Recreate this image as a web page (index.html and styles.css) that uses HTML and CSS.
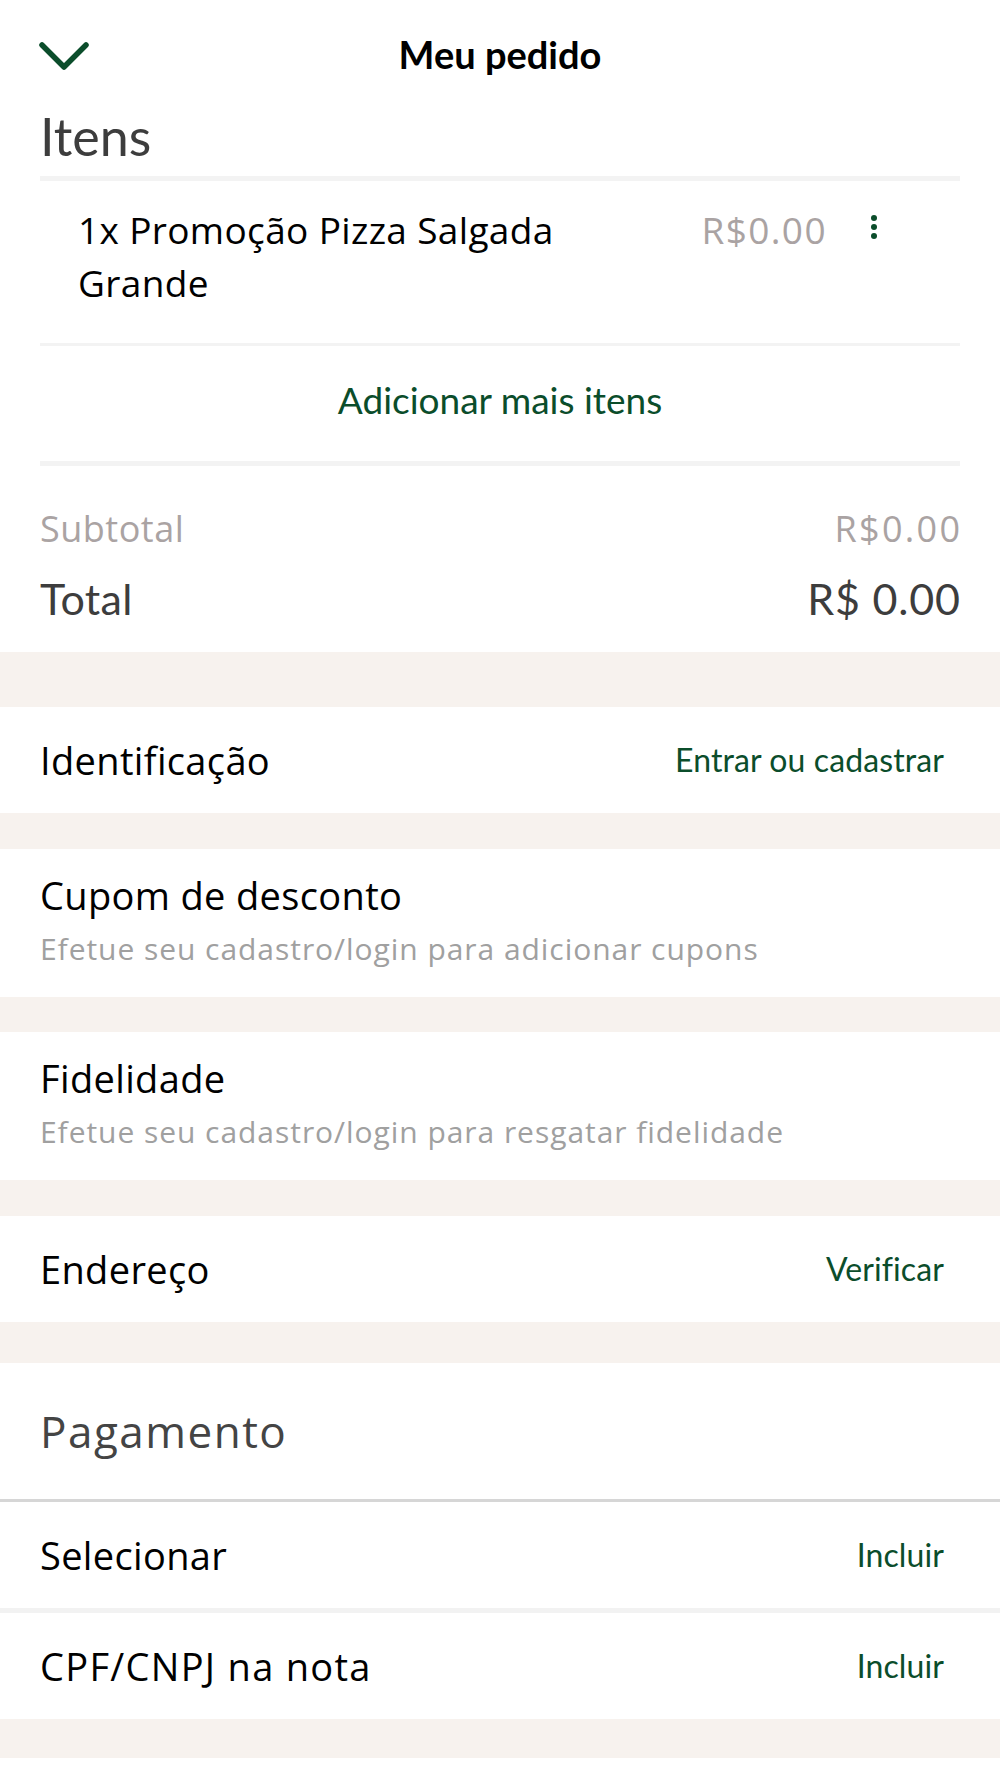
FILE: index.html
```html
<!DOCTYPE html>
<html lang="pt-BR">
<head>
<meta charset="utf-8">
<title>Meu pedido</title>
<link rel="stylesheet" href="styles.css">
</head>
<body>
<div class="page">
  <header class="topbar">
    <span class="back" aria-label="Fechar">
      <svg width="52" height="30" viewBox="0 0 52 30"><path d="M4 4 L26 26 L48 4" fill="none" stroke="#0b4d2b" stroke-width="5.5" stroke-linecap="round" stroke-linejoin="round"/></svg>
    </span>
    <h1 class="title">Meu pedido</h1>
  </header>

  <section class="items">
    <h2 class="section-title">Itens</h2>
    <div class="divider thick"></div>
    <div class="item">
      <div class="item-name">1x Promoção Pizza Salgada Grande</div>
      <div class="item-price">R$0.00</div>
      <div class="kebab"><span></span><span></span><span></span></div>
    </div>
    <div class="divider thin"></div>
    <div class="add-more">Adicionar mais itens</div>
    <div class="divider thick"></div>
    <div class="totals">
      <div class="subtotal"><span>Subtotal</span><span class="sub-price">R$0.00</span></div>
      <div class="total"><span>Total</span><span class="total-price">R$ 0.00</span></div>
    </div>
  </section>

  <div class="gap g55"></div>

  <div class="row">
    <span class="label">Identificação</span>
    <span class="link">Entrar ou cadastrar</span>
  </div>

  <div class="gap g36"></div>

  <div class="card">
    <div class="label">Cupom de desconto</div>
    <div class="hint">Efetue seu cadastro/login para adicionar cupons</div>
  </div>

  <div class="gap g35"></div>

  <div class="card">
    <div class="label">Fidelidade</div>
    <div class="hint">Efetue seu cadastro/login para resgatar fidelidade</div>
  </div>

  <div class="gap g36"></div>

  <div class="row">
    <span class="label">Endereço</span>
    <span class="link">Verificar</span>
  </div>

  <div class="gap g41"></div>

  <div class="pay-head">Pagamento</div>
  <div class="rule dark"></div>
  <div class="row">
    <span class="label">Selecionar</span>
    <span class="link">Incluir</span>
  </div>
  <div class="rule light"></div>
  <div class="row">
    <span class="label wide">CPF/CNPJ na nota</span>
    <span class="link">Incluir</span>
  </div>

  <div class="gap g39"></div>
  <div class="tail"></div>
</div>
</body>
</html>
```

FILE: styles.css
```css
* { box-sizing: border-box; }
html, body { margin: 0; padding: 0; background: #ffffff; }
body {
  font-family: "Open Sans", "Noto Sans", "Liberation Sans", sans-serif;
  color: #000;
  width: 1000px;
}
.page { width: 1000px; }

.topbar {
  height: 104px;
  padding: 4px 40px 0 38px;
  display: flex;
  align-items: center;
  position: relative;
}
.back { display: flex; width: 52px; height: 30px; margin-top: 4px; }
.title {
  position: absolute;
  left: 0; right: 0; top: 4px;
  margin: 0;
  text-align: center;
  font-family: Lato, "Open Sans", sans-serif;
  font-size: 38px;
  font-weight: 700;
  line-height: 100px;
  pointer-events: none;
}

.items { padding: 0 40px; }
.section-title {
  margin: 0 0 8px;
  font-family: Lato, "Open Sans", sans-serif;
  font-size: 52px;
  font-weight: 400;
  line-height: 64px;
  color: #3d3d3d;
}
.divider { background: #f3f3f3; }
.divider.thick { height: 5px; }
.divider.thin { height: 3px; }

.item {
  display: flex;
  align-items: flex-start;
  padding: 22px 0 34px 38px;
}
.item-name {
  flex: 1;
  font-size: 37px;
  letter-spacing: 0.35px;
  line-height: 53px;
  padding-right: 40px;
  max-width: 560px;
}
.item-price {
  font-size: 37px;
  letter-spacing: 1.4px;
  line-height: 53px;
  color: #aaa3a3;
  margin-left: auto;
}
.kebab {
  width: 40px;
  margin: 12px 66px 0 27px;
  display: flex;
  flex-direction: column;
  align-items: center;
  gap: 3px;
}
.kebab span {
  width: 6px; height: 6px;
  border-radius: 50%;
  background: #0b4d2b;
}

.add-more {
  text-align: center;
  font-family: Lato, "Open Sans", sans-serif;
  font-size: 37px;
  line-height: 108px;
  padding-bottom: 7px;
  color: #0b4d2b;
}

.totals { padding: 38px 0 23px; }
.subtotal, .total { display: flex; justify-content: space-between; }
.subtotal {
  font-size: 36px;
  letter-spacing: 0.5px;
  line-height: 50px;
  color: #aaa3a3;
  margin-bottom: 15px;
}
.sub-price { letter-spacing: 2.3px; margin-right: -2.3px; }
.total {
  font-family: Lato, "Open Sans", sans-serif;
  font-size: 43px;
  letter-spacing: 0.3px;
  line-height: 60px;
  color: #3d3d3d;
}
.total-price { letter-spacing: 0.8px; margin-right: -0.8px; }

.gap { background: #f7f2ee; }
.g55 { height: 55px; }
.g36 { height: 36px; }
.g35 { height: 35px; }
.g41 { height: 41px; }
.g39 { height: 39px; }
.tail { height: 20px; }

.row {
  height: 106px;
  display: flex;
  align-items: center;
  justify-content: space-between;
  padding: 0 56px 0 40px;
}
.label { font-size: 38px; letter-spacing: 0.35px; line-height: 44px; color: #000; }
.label.wide { letter-spacing: 1.3px; }
.link {
  font-family: Lato, "Open Sans", sans-serif;
  font-size: 32px;
  letter-spacing: 0.1px;
  line-height: 44px;
  color: #0b4d2b;
}

.card {
  height: 148px;
  padding: 24px 40px 0;
}
.hint {
  margin-top: 14px;
  font-size: 30px;
  letter-spacing: 0.95px;
  line-height: 36px;
  color: #a0a0a0;
}

.pay-head {
  height: 136px;
  display: flex;
  align-items: center;
  padding: 0 40px;
  font-size: 44px;
  letter-spacing: 1.5px;
  color: #444;
}
.rule.dark { height: 3px; background: #d6d6d6; }
.rule.light { height: 5px; background: #f2f2f2; }
```
